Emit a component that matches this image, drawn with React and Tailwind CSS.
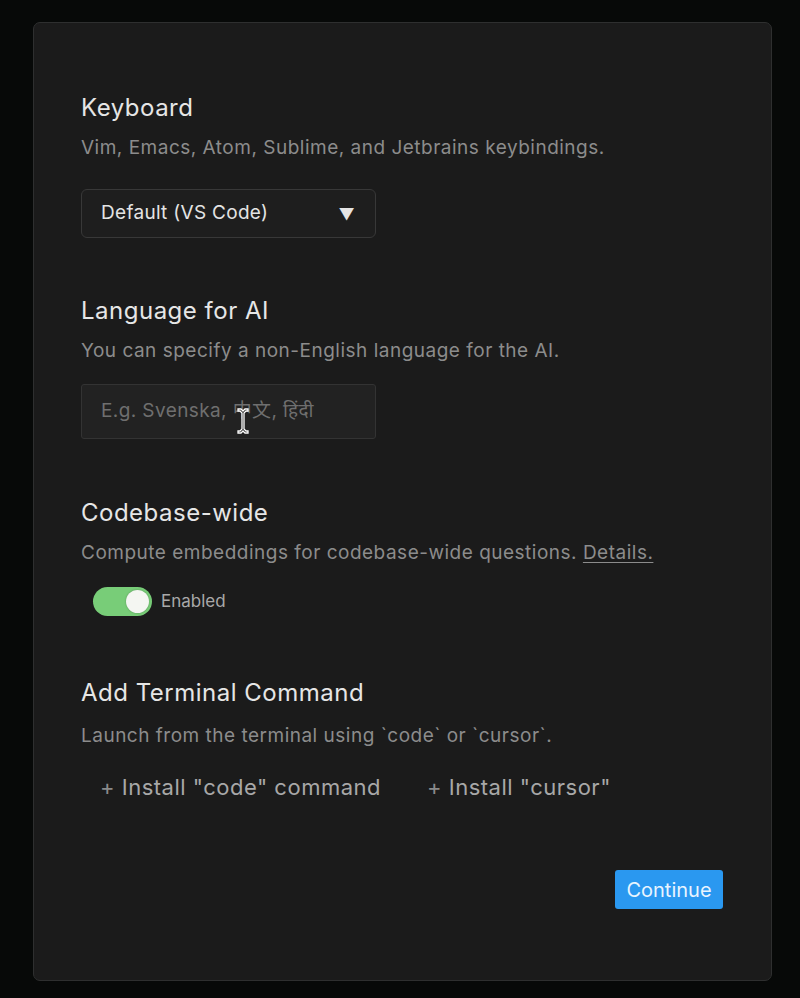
import React from 'react';

const Section = ({ title, desc, children, className = '', descGap = 'mt-[13px]' }) => (
  <div className={className}>
    <h2 className="text-[24px] leading-[30px] tracking-[0.5px] text-[#e6e6e6]">{title}</h2>
    <p className={`${descGap} text-[19px] leading-[24px] tracking-[0.5px] text-[#8c8c8c]`}>{desc}</p>
    {children}
  </div>
);

export default function App() {
  return (
    <div
      className="min-h-[998px] bg-[#070908] pl-[33px] pr-[28px] pt-[22px] pb-[17px]"
      style={{ fontFamily: 'Inter, "Liberation Sans", sans-serif' }}
    >
      <div className="h-[959px] rounded-[7px] border border-[#2e2f2f] bg-[#1b1b1b] pl-[47px] pr-[48px] pt-[70px]">
        <Section title="Keyboard" desc="Vim, Emacs, Atom, Sublime, and Jetbrains keybindings.">
          <button className="mt-[29px] flex h-[49px] w-[295px] items-center justify-between rounded-[6px] border border-[#383838] bg-[#1e1e1e] pl-[19px] pr-[20px] text-[19px] tracking-[0.3px] text-[#e4e4e4]">
            <span>Default (VS Code)</span>
            <span className="text-[16px]">▼</span>
          </button>
        </Section>

        <Section className="mt-[58px]" title="Language for AI" desc="You can specify a non-English language for the AI.">
          <div className="relative mt-[21px] flex h-[55px] w-[295px] items-center rounded-[3px] border border-[#333] bg-[#222222] pl-[19px]">
            <span className="text-[19px] tracking-[0.4px] text-[#6f6f6f]" style={{ fontFamily: 'Inter, "Noto Sans CJK SC", "Noto Sans Devanagari", "Noto Sans", sans-serif' }}>
              E.g. Svenska, 中文, हिंदी
            </span>
            <svg className="absolute left-[154px] top-[22px]" width="14" height="28" viewBox="0 0 14 28">
              <path d="M2 2h3l2 2 2-2h3v2h-2l-2 2v16l2 2h2v2h-3l-2-2-2 2H2v-2h2l2-2V6L4 4H2z" fill="#111" stroke="#fff" strokeWidth="1.3" />
            </svg>
          </div>
        </Section>

        <Section
          className="mt-[59px]"
          title="Codebase-wide"
          desc={
            <>
              Compute embeddings for codebase-wide questions.{' '}
              <span className="underline underline-offset-[3px]">Details.</span>
            </>
          }
        >
          <div className="mt-[22px] flex items-center pl-[12px]">
            <div className="flex h-[29px] w-[59px] items-center justify-end rounded-full bg-[#78cd78] pr-[3px]">
              <div className="h-[23px] w-[23px] rounded-full bg-[#f4f6f2] shadow-[0_0_2px_rgba(0,0,0,0.3)]" />
            </div>
            <span className="ml-[9px] text-[17px] text-[#a9a9a9]">Enabled</span>
          </div>
        </Section>

        <Section
          className="mt-[62px]"
          descGap="mt-[16px]"
          title="Add Terminal Command"
          desc="Launch from the terminal using `code` or `cursor`."
        >
          <div className="mt-[23px] flex items-center pl-[19px] text-[22px] tracking-[0.5px] text-[#a8a8a8]">
            <span><span className="text-[#8a8a8a]">+</span> Install "code" command</span>
            <span className="ml-[46px]"><span className="text-[#8a8a8a]">+</span> Install "cursor"</span>
          </div>
        </Section>

        <div className="mt-[66px] flex justify-end">
          <button className="h-[39px] w-[108px] rounded-[3px] bg-[#2a98f0] text-[20px] text-[#e8f4ff]">Continue</button>
        </div>
      </div>
    </div>
  );
}
